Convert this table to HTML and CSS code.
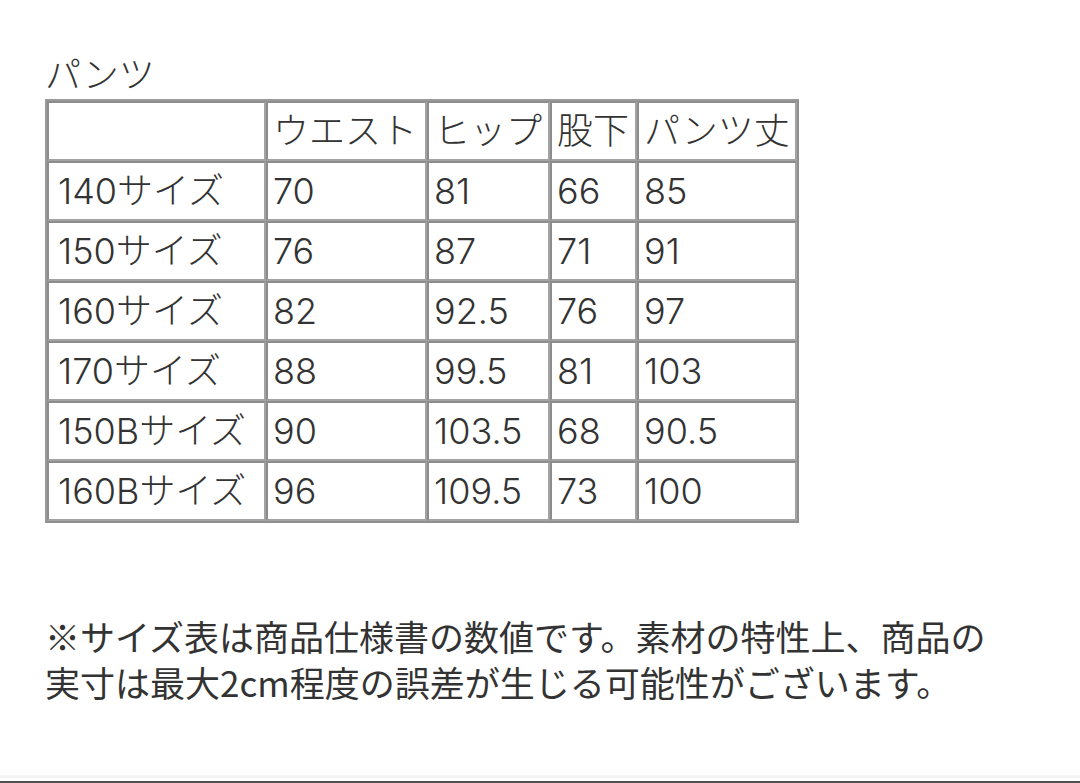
FILE: index.html
```html
<!DOCTYPE html>
<html lang="ja">
<head>
<meta charset="utf-8">
<title>パンツ サイズ表</title>
<link rel="stylesheet" href="styles.css">
</head>
<body>
<main class="page">
  <h2 class="title">パンツ</h2>
  <table class="size-table">
    <colgroup>
      <col class="c1"><col class="c2"><col class="c3"><col class="c4"><col class="c5">
    </colgroup>
    <tr><td></td><td>ウエスト</td><td>ヒップ</td><td>股下</td><td>パンツ丈</td></tr>
    <tr><td>140サイズ</td><td>70</td><td>81</td><td>66</td><td>85</td></tr>
    <tr><td>150サイズ</td><td>76</td><td>87</td><td>71</td><td>91</td></tr>
    <tr><td>160サイズ</td><td>82</td><td>92.5</td><td>76</td><td>97</td></tr>
    <tr><td>170サイズ</td><td>88</td><td>99.5</td><td>81</td><td>103</td></tr>
    <tr><td>150Bサイズ</td><td>90</td><td>103.5</td><td>68</td><td>90.5</td></tr>
    <tr><td>160Bサイズ</td><td>96</td><td>109.5</td><td>73</td><td>100</td></tr>
  </table>
  <p class="note">※サイズ表は商品仕様書の数値です。素材の特性上、商品の実寸は最大2cm程度の誤差が生じる可能性がございます。</p>
</main>
<div class="bottom-bar"></div>
</body>
</html>
```

FILE: styles.css
```css
html, body {
  margin: 0;
  padding: 0;
  background: #ffffff;
}

body {
  display: flex;
  flex-direction: column;
  min-height: 100vh;
  font-family: "Inter", "Noto Sans CJK JP", "Noto Sans", sans-serif;
  font-weight: 300;
  color: #333333;
  font-size: 36px;
  line-height: 46px;
}

.page {
  flex: 1;
  padding: 52px 0 0 45px;
}

.title {
  margin: 0 0 1px 0;
  font-size: 36px;
  font-weight: 300;
  line-height: 46px;
}

.size-table {
  border-collapse: separate;
  border-spacing: 0;
  border: 2px solid #8f8f8f;
  border-top-color: #9a9a9a;
  border-left-color: #9a9a9a;
  table-layout: fixed;
  width: 754px;
}

.size-table col.c1 { width: 219px; }
.size-table col.c2 { width: 161px; }
.size-table col.c3 { width: 123px; }
.size-table col.c4 { width: 87px; }
.size-table col.c5 { width: 160px; }

.size-table td {
  box-sizing: border-box;
  height: 60px;
  padding: 0 0 0 5px;
  border: 2px solid #a3a3a3;
  border-top-color: #8c8c8c;
  border-left-color: #8c8c8c;
  font-size: 36px;
  line-height: 46px;
  white-space: nowrap;
  text-align: left;
  vertical-align: middle;
}

.size-table tr td:first-child {
  padding-left: 9px;
}

.note {
  width: 975px;
  margin: 90px 0 0 0;
  font-family: "Noto Sans CJK JP", "Noto Sans", sans-serif;
  font-weight: 400;
  font-size: 35px;
  line-height: 46px;
}

.bottom-bar {
  height: 3px;
  border-top: 1px solid #f1f1f1;
  border-bottom: 2px solid #4f4f4f;
  margin-bottom: 0;
  box-shadow: 0 -2px 0 0 #f6f6f6;
}
```
